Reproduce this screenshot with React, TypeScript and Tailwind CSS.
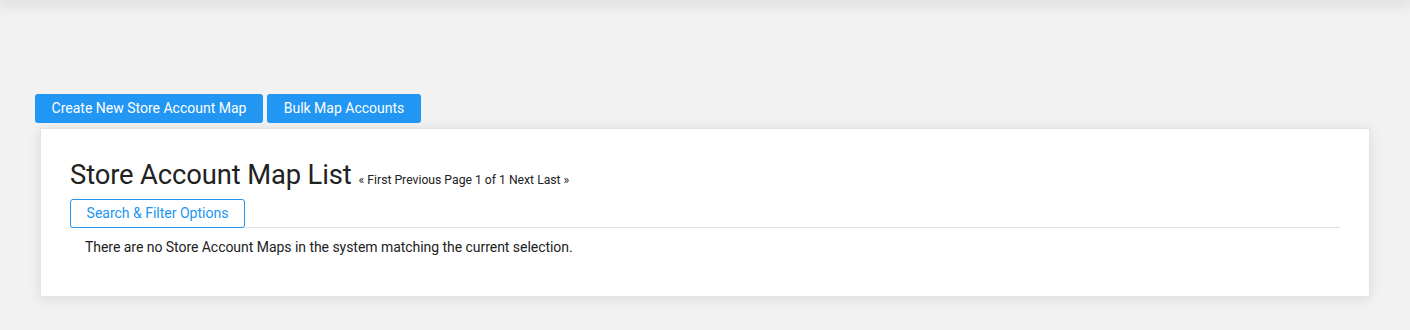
export default function App() {
  return (
    <div className="relative h-[330px] w-full overflow-hidden bg-[#f2f2f2] font-['Roboto',sans-serif]">
      {/* shadow of the header above the viewport */}
      <div className="h-0 w-full shadow-[0_0_14px_4px_rgba(0,0,0,0.12)]" />

      <div className="px-[35px] pt-[94px]">
        <div className="flex gap-1">
          <button className="h-[29px] w-[228px] rounded-[3px] bg-[#2196f3] text-[14px] text-white">
            Create New Store Account Map
          </button>
          <button className="h-[29px] w-[154px] rounded-[3px] bg-[#2196f3] text-[14px] text-white">
            Bulk Map Accounts
          </button>
        </div>

        <div className="mt-[5px] ml-[5px] mr-[5px] h-[169px] border border-[#dfe5ec] bg-white px-[29px] pt-[28px] shadow-[0_2px_12px_rgba(0,0,0,0.1)]">
          <div className="flex items-baseline">
            <h1 className="text-[27.4px] tracking-[-0.005em] leading-[36px] text-[#222]">Store Account Map List</h1>
            <span className="ml-[7px] text-[12.2px] text-[#222]">
              « First Previous Page 1 of 1 Next Last »
            </span>
          </div>
          <div className="mt-[6px] border-b border-[#dee2e6]">
            <button className="-mb-px h-[29px] w-[175px] rounded-[3px] border border-[#2196f3] bg-white text-[14px] text-[#2196f3]">
              Search &amp; Filter Options
            </button>
          </div>
          <p className="mt-[9px] pl-[15px] text-[14px] tracking-[-0.003em] text-[#222]">
            There are no Store Account Maps in the system matching the current selection.
          </p>
        </div>
      </div>
    </div>
  );
}
